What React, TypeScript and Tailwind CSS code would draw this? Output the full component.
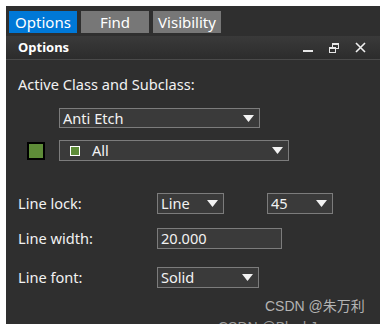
import React from 'react';

const font = { fontFamily: '"Noto Sans", "Liberation Sans", sans-serif' };

function Arrow() {
  return (
    <svg width="11" height="7" viewBox="0 0 11 7" className="shrink-0">
      <polygon points="0,0 11,0 5.5,7" fill="#f2f2f2" />
    </svg>
  );
}

function Select({ value, className, children }: { value: string; className: string; children?: React.ReactNode }) {
  return (
    <div
      className={`flex items-center justify-between border border-[#7c7c7c] bg-[#3a3a3a] pl-[3px] pr-[5px] text-[#f2f2f2] ${className}`}
    >
      <div className="flex items-center">
        {children}
        <span className="leading-none">{value}</span>
      </div>
      <Arrow />
    </div>
  );
}

export default function App() {
  return (
    <div className="relative h-[324px] w-[380px] overflow-hidden bg-white pl-[6px] pt-[6px]" style={font}>
      <div className="flex h-[330px] flex-col bg-[#2f2f2f]">
        {/* tab strip */}
        <div className="flex gap-[4px] pl-[3px] pt-[5px]">
          <div className="flex h-[22px] w-[68px] items-center justify-center bg-[#0078d7] text-[15px] text-white">Options</div>
          <div className="flex h-[22px] w-[68px] items-center justify-center bg-[#777777] text-[15px] text-white">Find</div>
          <div className="flex h-[22px] w-[68px] items-center justify-center bg-[#777777] text-[15px] text-white">Visibility</div>
        </div>

        {/* panel header */}
        <div className="mt-[3px] flex h-[24px] items-center justify-between border-b border-[#4a4a4a] bg-gradient-to-b from-[#3a3a3a] to-[#2c2c2c] pl-[12px] pr-[14px]">
          <span className="text-[13px] font-bold text-white">Options</span>
          <div className="flex items-center gap-[16px]">
            <svg width="10" height="10" viewBox="0 0 10 10">
              <rect x="0" y="7" width="10" height="2" fill="#e6e6e6" />
            </svg>
            <svg width="10" height="10" viewBox="0 0 10 10">
              <rect x="3.5" y="0.5" width="6" height="5" fill="none" stroke="#e6e6e6" />
              <rect x="3.5" y="0.5" width="6" height="1.5" fill="#e6e6e6" />
              <rect x="0.5" y="4.5" width="6" height="5" fill="#2f2f2f" stroke="#e6e6e6" />
              <rect x="0.5" y="4.5" width="6" height="1.5" fill="#e6e6e6" />
            </svg>
            <svg width="11" height="11" viewBox="0 0 11 11">
              <path d="M1 1 L10 10 M10 1 L1 10" stroke="#f0f0f0" strokeWidth="1.6" />
            </svg>
          </div>
        </div>

        {/* body */}
        <div className="flex flex-col pl-[12px] pt-[14px] text-[14.6px] leading-[21px] text-[#f2f2f2]">
          <div className="leading-[20px]">Active Class and Subclass:</div>

          <Select value="Anti Etch" className="ml-[41px] mt-[14px] h-[20px] w-[201px]" />

          <div className="mt-[12px] flex items-center">
            <div className="ml-[9px] h-[18px] w-[18px] border-2 border-black bg-[#5e8c38]" />
            <Select value="All" className="ml-[14px] h-[21px] w-[230px]">
              <div className="ml-[7px] mr-[12px] h-[10px] w-[10px] border border-white bg-[#5e8c38]" />
            </Select>
          </div>

          <div className="mt-[32px] flex items-center">
            <span className="w-[139px]">Line lock:</span>
            <Select value="Line" className="h-[21px] w-[67px]" />
            <Select value="45" className="ml-[43px] h-[21px] w-[66px]" />
          </div>

          <div className="mt-[14px] flex items-center">
            <span className="w-[139px]">Line width:</span>
            <div className="flex h-[21px] w-[125px] items-center border border-[#7c7c7c] bg-[#3a3a3a] pl-[3px] leading-none">20.000</div>
          </div>

          <div className="mt-[18px] flex items-center">
            <span className="w-[139px]">Line font:</span>
            <Select value="Solid" className="h-[21px] w-[102px]" />
          </div>
        </div>
      </div>

      {/* watermark */}
      <div className="absolute left-[265px] top-[296px] text-[14px] text-[#b4b4b4]" style={{ fontFamily: '"Liberation Sans", "Noto Sans CJK SC", sans-serif' }}>
        CSDN @朱万利
      </div>
      <div className="absolute left-[218px] top-[317px] text-[14px] text-[#9a9a9a]" style={{ fontFamily: '"Liberation Sans", "Noto Sans CJK SC", sans-serif' }}>
        CSDN @BlackJ.....
      </div>
    </div>
  );
}
